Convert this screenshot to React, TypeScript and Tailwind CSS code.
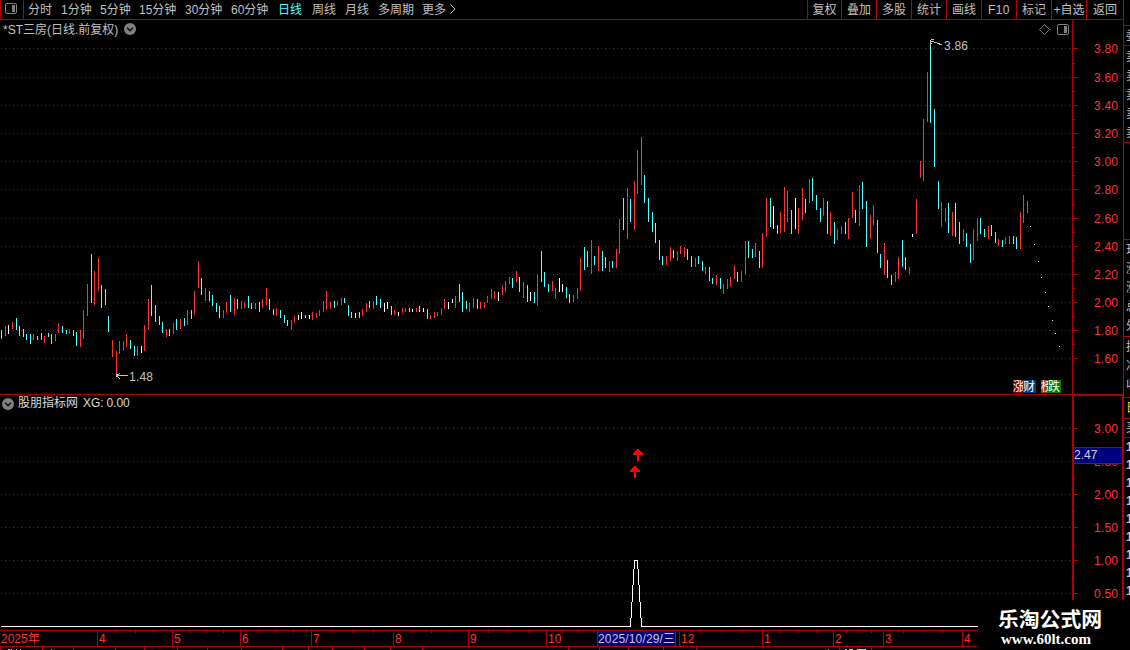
import React from 'react';

type Origin = { x: number; y: number; bars: string };

// Each bar: position, high, low, tone (r = up, c = down, w = flat), in thirds of a pixel from the block origin.
const blocks: Origin[] = [
  {
    x: 0,
    y: 230,
    bars:
      '4,300,327,c 16,288,318,r 25,285,312,w 37,276,297,r 49,264,300,c 58,288,318,c 70,297,321,c 79,312,330,c 91,312,342,c 100,312,330,r 112,318,330,c 124,309,330,c 133,318,339,r 145,309,321,c 154,312,342,c 166,312,333,r 175,279,309,r 187,288,309,c 199,300,312,c 208,297,312,r 220,300,318,c 229,306,348,c 241,300,351,r 250,240,327,r 262,162,258,r 274,72,219,c 283,123,225,r 295,84,183,r 304,165,234,c 316,177,225,c 325,258,306,c 337,330,381,r 349,363,432,r 358,333,372,r 370,333,363,r 379,312,351,r 391,330,357,c 403,348,378,c 412,348,378,r 424,348,369,w 433,285,363,r 445,207,300,r 454,165,258,c 466,225,276,c 478,258,285,c 487,276,309,c 499,297,321,r 508,297,318,c 520,279,312,r 529,267,300,c 541,267,297,r 553,264,288,c 562,240,285,r 574,240,267,c 583,183,255,r 595,93,174,r 604,144,195,c 616,174,213,r 628,183,213,c 637,195,228,c 649,219,246,c 658,228,264,c 670,240,264,r 679,216,249,r 691,195,246,c 703,204,255,r 712,207,237,c 724,213,237,r 733,216,234,r 745,198,234,c 754,219,237,c 766,219,237,r 778,216,246,c 787,207,234,r 799,174,225,r 808,207,240,c 820,237,255,c 829,234,258,r',
  },
  {
    x: 270,
    y: 230,
    bars:
      '31,240,264,c 43,255,279,c 52,270,288,c 64,270,300,r 73,258,279,r 85,255,270,w 94,246,267,w 106,255,264,c 118,255,267,w 127,246,270,r 139,249,264,r 148,240,258,r 160,213,246,r 169,183,240,r 181,216,237,r 193,213,234,c 202,213,228,r 214,204,225,r 223,204,219,c 235,225,258,c 244,246,264,c 256,249,264,w 268,246,264,c 277,237,258,r 289,219,246,r 298,213,234,c 310,213,237,r 319,198,225,c 331,207,234,c 343,219,246,w 352,216,237,w 364,228,255,c 373,240,255,r 385,246,258,w 397,234,249,r 406,234,246,r 418,234,246,c 427,237,246,w 439,234,246,r 448,228,246,c 460,234,246,w 472,237,267,c 481,255,267,r 493,246,264,r 502,246,258,r 514,234,255,r 523,207,237,r 535,216,237,w 547,207,219,w 556,198,234,r 568,162,216,c 577,186,246,c 589,213,237,c 598,219,246,r 610,204,234,r 622,207,237,c 631,216,237,r 643,216,234,r 652,198,219,r 664,177,207,r 673,183,207,r 685,186,213,w 697,165,195,r 706,153,186,r 718,141,162,r 727,144,174,c 739,123,156,r 748,141,186,c 760,156,204,r 772,165,216,c 781,186,213,w 793,186,219,c 802,132,228,r 814,63,156,c 823,126,171,c 835,162,186,c',
  },
  {
    x: 530,
    y: 120,
    bars:
      '67,483,513,r 76,504,537,r 88,474,516,w 97,492,516,w 109,501,534,c 118,522,549,c 130,525,546,r 142,504,537,r 151,414,513,r 163,381,450,c 172,393,441,c 184,360,462,r 193,408,435,c 205,378,453,r 217,393,453,c 226,411,444,c 238,423,456,r 247,423,444,c 259,387,444,r 268,297,402,r 280,234,330,c 292,204,357,r 301,237,306,c 313,183,330,r 322,90,222,r 334,51,195,r 343,165,249,c 355,234,306,c 367,276,336,c 376,309,369,c 388,360,420,c 397,408,435,c 409,408,435,r 421,381,423,r 430,390,414,c 442,393,423,r 451,378,402,r 463,381,411,r 472,387,420,c 484,408,441,c 496,414,441,r 505,408,432,c 517,423,453,c 526,441,462,r 538,441,483,c 547,474,492,c 559,465,495,r 571,474,507,c 580,492,522,r 592,477,507,r 601,471,501,r 613,435,477,r 622,456,486,c 634,453,486,r',
  },
  {
    x: 740,
    y: 160,
    bars:
      '16,243,345,r 25,243,294,c 37,267,294,c 46,249,291,r 58,273,324,c 67,219,324,r 79,114,231,r 91,114,201,c 100,138,207,w 112,195,222,c 121,156,219,r 133,81,216,r 142,93,186,r 154,150,222,c 166,114,207,w 175,144,222,r 187,84,180,r 196,117,159,c 208,57,129,r 217,54,123,c 229,105,150,c 241,144,186,c 250,114,168,r 262,123,222,c 271,156,228,r 283,186,252,c 292,207,240,r 304,198,222,r 316,186,222,c 325,174,237,r 337,96,174,r 346,150,189,c 358,75,198,r 367,66,147,c 379,123,261,c 391,165,237,r 400,135,195,r 412,180,279,c 421,282,324,c 433,249,345,r 442,300,354,c 454,345,375,c',
  },
  {
    x: 890,
    y: 30,
    bars:
      '16,726,756,r 25,681,747,r 37,630,711,c 46,681,720,c 58,711,735,r 67,612,621,w 79,507,612,r 91,393,444,r 100,267,453,r 112,126,276,r 121,39,279,c 133,237,411,c 145,453,537,c 154,516,591,r 166,534,576,r 175,519,609,c 187,546,618,r 196,519,621,c 208,576,642,c 220,597,633,r 229,609,651,c 241,642,699,c 250,597,690,r 262,564,633,r 271,564,612,c 283,597,621,c 295,588,627,r 304,585,618,c 316,606,639,c 325,627,648,r 337,630,651,c 346,621,642,r 358,618,642,r 370,618,642,c 379,621,657,c 391,546,657,r 400,495,579,r 412,513,549,r 421,588,591,w 433,642,645,w 445,693,696,w 454,741,744,w 466,786,789,w 475,828,831,w 487,870,873,w 496,909,912,w 508,948,951,w',
  },
];

const tone: Record<string, string> = { r: '#ff3232', c: '#54ffff', w: '#ffffff' };

const bars = blocks.flatMap((b) =>
  b.bars.split(' ').map((s) => {
    const [x, top, bottom, t] = s.split(',');
    return {
      x: b.x + Math.floor(+x / 3),
      y: b.y + Math.round(+top / 3),
      h: Math.round((+bottom - +top) / 3),
      fill: tone[t],
    };
  }),
);

const priceLevels: [number, string][] = [
  [48, '3.80'], [77, '3.60'], [105, '3.40'], [133, '3.20'], [161, '3.00'], [189, '2.80'],
  [218, '2.60'], [246, '2.40'], [274, '2.20'], [302, '2.00'], [330, '1.80'], [358, '1.60'],
];
const priceMinor = [63, 91, 119, 147, 175, 204, 232, 260, 288, 316, 344];
const signalLevels: [number, string][] = [
  [428, '3.00'], [461, '2.50'], [494, '2.00'], [527, '1.50'], [560, '1.00'], [593, '0.50'],
];
const signalMinor = [445, 478, 511, 544, 577];

const periods: [string, string][] = [
  ['分时', 'w-[33px]'], ['1分钟', 'w-[39px]'], ['5分钟', 'w-[39px]'], ['15分钟', 'w-[46px]'],
  ['30分钟', 'w-[46px]'], ['60分钟', 'w-[47px]'], ['日线', 'w-[34px] text-[#54ffff]'], ['周线', 'w-[33px]'],
  ['月线', 'w-[33px]'], ['多周期', 'w-[44px]'], ['更多', 'w-[28px]'],
];

const actions: [string, string][] = [
  ['复权', 'w-[34px]'], ['叠加', 'w-[35px]'], ['多股', 'w-[35px]'], ['统计', 'w-[35px]'], ['画线', 'w-[35px]'],
  ['F10', 'w-[35px] tracking-[0.4px]'], ['标记', 'w-[35px]'], ['+自选', 'w-[35px]'], ['返回', 'w-[37px]'],
];

const months: [string, string][] = [
  ['2025年', 'w-[97px] pl-[1px]'], ['4', 'w-[75px]'], ['5', 'w-[68px]'], ['6', 'w-[71px]'], ['7', 'w-[82px]'],
  ['8', 'w-[75px]'], ['9', 'w-[78px]'], ['10', 'w-[133px]'], ['12', 'w-[83px]'], ['1', 'w-[71px]'],
  ['2', 'w-[50px]'], ['3', 'w-[79px]'], ['4', 'w-[16px]'],
];
const dividers = [97, 172, 240, 311, 393, 468, 546, 679, 762, 833, 883, 962];
const weekTicks = [
  116, 135, 153, 189, 206, 223, 258, 276, 293, 332, 352, 373, 412, 431, 449, 488, 508, 528, 562, 578, 593,
  700, 721, 742, 780, 798, 816, 846, 858, 871, 903, 923, 942,
];
const lowerTicks = [
  0, 42, 73, 115, 144, 177, 207, 241, 282, 308, 332, 364, 390, 422, 568, 599, 628, 663, 696, 839, 871,
];

function Grid({ levels }: { levels: [number, string][] }) {
  return (
    <>
      {levels.map(([y]) => (
        <line key={y} x1={1} x2={1072} y1={y + 0.5} y2={y + 0.5} stroke="#b00000" strokeDasharray="1 3" />
      ))}
    </>
  );
}

function Axis({ levels, minor, x }: { levels: [number, string][]; minor: number[]; x: number }) {
  return (
    <>
      {levels.map(([y, t]) => (
        <g key={y}>
          <rect x={x} y={y} width={1078 - x} height={1} fill="#b00000" />
          <text x={1094} y={y + 5} fill="#ff3232" fontSize={12} textLength={24} lengthAdjust="spacing">
            {t}
          </text>
        </g>
      ))}
      {minor.map((y) => (
        <rect key={y} x={x} y={y} width={1075 - x} height={1} fill="#b00000" />
      ))}
    </>
  );
}

function ChevronDisc() {
  return (
    <svg width="12" height="12" viewBox="0 0 12 12" className="shrink-0">
      <circle cx="6" cy="6" r="6" fill="#808080" />
      <path d="M3 4.8 6 7.6 9 4.8" fill="none" stroke="#101010" strokeWidth="1.5" />
    </svg>
  );
}

function PanelIcon({ className }: { className?: string }) {
  return (
    <svg width="12" height="11" viewBox="0 0 12 11" className={className}>
      <rect x="0.5" y="0.5" width="11" height="10" rx="1.5" fill="none" stroke="#808080" />
      <rect x="7" y="2" width="3" height="7" fill="#808080" />
    </svg>
  );
}

function TopBar() {
  return (
    <header className="flex h-5 shrink-0 border-b border-l border-[#b00000] leading-[20px]">
      <div className="flex w-[23px] shrink-0 border-r border-[#b00000] pl-1 pt-[3px]">
        <PanelIcon />
      </div>
      <nav className="flex h-[19px] flex-1 pl-[4px]">
        {periods.map(([t, c]) => (
          <span key={t} className={`shrink-0 ${c}`}>
            {t}
          </span>
        ))}
        <svg width="6" height="10" viewBox="0 0 6 10" className="mt-1">
          <path d="M0.5 0.5 5 5 0.5 9.5" fill="none" stroke="#c0c0c0" />
        </svg>
      </nav>
      <div className="flex h-[19px]">
        {actions.map(([t, c]) => (
          <span key={t} className={`flex shrink-0 justify-center whitespace-nowrap border-l border-[#b00000] ${c}`}>
            {t}
          </span>
        ))}
      </div>
    </header>
  );
}

function PricePanel() {
  return (
    <section className="relative h-[374px] shrink-0">
      <svg width="1123" height="374" viewBox="0 20 1123 374" className="block">
        <g shapeRendering="crispEdges">
          <Grid levels={priceLevels} />
          {bars.map((b) => (
            <rect key={b.x} x={b.x} y={b.y} width={1} height={b.h} fill={b.fill} />
          ))}
          <rect x={1072} y={20} width={1} height={374} fill="#b00000" />
          <Axis levels={priceLevels} minor={priceMinor} x={1073} />
        </g>
        <g fill="#c0c0c0" shapeRendering="crispEdges">
          <path d="M931 39h3v1h-3zM930 40h1v5h-1zM931 41h3v1h-3zM934 42h3v1h-3zM937 43h3v1h-3zM939 44h3v1h-3zM931 43h1v1h-1z" />
          <path d="M116 375h12v1h-12zM116 374h2v3h-2zM118 374h1v1h-1zM119 373h1v1h-1zM118 377h1v1h-1zM119 378h1v1h-1z" />
        </g>
        <g fill="#c0c0c0" fontSize={12}>
          <text x={944} y={50} textLength={24}>3.86</text>
          <text x={129} y={381} textLength={24}>1.48</text>
        </g>
        <path d="M1044.500 24.500l5 5-5 5-5-5z" fill="none" stroke="#808080" />
      </svg>
      <div className="absolute left-[3px] top-0 flex items-center gap-[6px] leading-[20px]">
        <span>*ST三房(日线.前复权)</span>
        <div className="-mt-[2px]">
          <ChevronDisc />
        </div>
      </div>
      <PanelIcon className="absolute left-[1057px] top-1" />
      <div className="absolute left-[1013px] top-[360px] flex h-[13px] leading-[14px] text-white">
        <span className="w-[10px] overflow-hidden bg-[#800000]">涨</span>
        <span className="w-[13px] bg-[#003c78]">财</span>
        <span className="ml-[5px] w-[7px] overflow-hidden bg-[#904000]">榜</span>
        <span className="w-[13px] bg-[#008000]">跌</span>
      </div>
    </section>
  );
}

function SignalPanel() {
  return (
    <section className="relative h-[236px] shrink-0">
      <svg width="1123" height="236" viewBox="0 394 1123 236" className="block">
        <g shapeRendering="crispEdges">
          <Grid levels={signalLevels} />
          <rect x={0} y={394} width={1123} height={1} fill="#b00000" />
          <rect x={1072} y={394} width={51} height={2} fill="#b00000" />
          <rect x={1072} y={394} width={2} height={206} fill="#b00000" />
          <rect x={1122} y={394} width={1} height={206} fill="#b00000" />
          <Axis levels={signalLevels} minor={signalMinor} x={1074} />
          <g fill="#ffffff">
            <rect x={1} y={626} width={630} height={1} />
            <rect x={641} y={626} width={337} height={1} />
            <rect x={634} y={560} width={4} height={1} />
            <rect x={634} y={560} width={1} height={9} />
            <rect x={637} y={560} width={1} height={9} />
            <rect x={633} y={569} width={1} height={16} />
            <rect x={638} y={569} width={1} height={16} />
            <rect x={632} y={585} width={1} height={17} />
            <rect x={639} y={585} width={1} height={17} />
            <rect x={631} y={602} width={1} height={16} />
            <rect x={640} y={602} width={1} height={16} />
            <rect x={630} y={618} width={1} height={9} />
            <rect x={641} y={618} width={1} height={9} />
          </g>
          <rect x={1074} y={447} width={48} height={17} fill="#b00000" />
          <rect x={1074} y={448} width={48} height={15} fill="#000080" />
        </g>
        <g fill="#ff0000">
          <path d="M637 449h2v1h1v1h1v1h1v1h1v2h-4v6h-2v-6h-4v-2h1v-1h1v-1h1v-1h1z" />
          <path d="M634 466h2v1h1v1h1v1h1v1h1v2h-4v6h-2v-6h-4v-2h1v-1h1v-1h1v-1h1z" />
        </g>
        <text x={1074} y={459} fill="#d0d0d0" fontSize={12}>2.47</text>
      </svg>
      <div className="absolute left-[2px] top-0 flex items-center gap-1 leading-[19px] text-[#d8d8d8]">
        <ChevronDisc />
        <span className="flex gap-[5px]">
          <span>股朋指标网</span>
          <span className="tracking-[-0.1px]">XG: 0.00</span>
        </span>
      </div>
    </section>
  );
}

function Timeline() {
  return (
    <footer className="relative h-5 w-[978px] shrink-0 overflow-hidden text-[#ff3232]">
      <svg width="978" height="20" viewBox="0 0 978 20" className="absolute inset-0" shapeRendering="crispEdges" fill="#b00000">
        <rect width={978} height={1} />
        <rect y={16} width={978} height={1} />
        {dividers.map((x) => <rect key={x} x={x} width={1} height={16} />)}
        {weekTicks.map((x) => <rect key={x} x={x} width={1} height={3} />)}
        {lowerTicks.map((x) => <rect key={x} x={x} y={16} width={1} height={4} />)}
        <g fill="#c0c0c0">
          <path d="M8 19h2v1h-2zM11 19h1v1h-1zM16 19h1v1h-1zM20 19h1v1h-1zM51 19h1v1h-1zM828 19h1v1h-1zM845 19h2v1h-2z" />
          <path d="M849 19h4v1h-4zM857 19h9v1h-9z" fill="#54ffff" />
        </g>
      </svg>
      <div className="relative flex leading-[19px]">
        {months.map(([t, c], i) => (
          <span key={i} className={`shrink-0 ${i ? 'pl-[2px]' : ''} ${c}`}>
            {t}
          </span>
        ))}
      </div>
      <span className="absolute left-[597px] top-0 h-[17px] w-[79px] whitespace-nowrap border border-[#b00000] bg-[#000080] text-center leading-[16px] tracking-[0.15px] text-[#c8c8c8]">
        2025/10/29/三
      </span>
    </footer>
  );
}

const stripGroups: [string, string[]][] = [
  ['h-[25px]', []],
  ['h-[20px] pt-[1px] leading-[19px]', ['委']],
  ['h-[97px] leading-[19px] pt-[2px]', ['卖', '卖', '卖', '卖', '卖']],
  ['h-[97px]', []],
  ['h-[97px] leading-[19px] pt-px', ['现', '涨', '涨', '总', '外']],
  ['h-[61px] leading-[19px] pt-px', ['换', '净', '收']],
  ['h-[21px] leading-[20px] text-[#e0e000]', ['日']],
  ['h-[19px] leading-[18px]', ['买']],
  ['h-[163px] leading-[18px] font-bold', ['1', '1', '1', '1', '1', '1', '1', '1', '1']],
];

function SideStrip() {
  return (
    <aside className="flex h-[600px] w-[7px] shrink-0 flex-col overflow-hidden border-l border-[#b00000]">
      {stripGroups.map(([c, rows], i) => (
        <div key={i} className={`shrink-0 overflow-hidden pl-[2px] ${i ? 'border-t border-[#b00000]' : ''} ${c}`}>
          {rows.map((t, j) => (
            <div key={j} className="w-3">
              {t}
            </div>
          ))}
        </div>
      ))}
    </aside>
  );
}

export default function App() {
  return (
    <div className="relative flex h-[650px] w-[1130px] overflow-hidden bg-black font-['Liberation_Sans','Noto_Sans_CJK_SC',sans-serif] text-xs text-[#c0c0c0]">
      <main className="flex w-[1123px] shrink-0 flex-col">
        <TopBar />
        <PricePanel />
        <SignalPanel />
        <Timeline />
      </main>
      <SideStrip />
      <div className="absolute left-[978px] top-[600px] h-[50px] w-[152px] bg-black text-white">
        <div className="pl-5 pt-[7px] text-[20.8px] font-bold leading-[25px]">乐淘公式网</div>
        <div className="pl-[23px] font-['Liberation_Serif',serif] text-[15px] font-bold leading-[15px]">www.60lt.com</div>
      </div>
    </div>
  );
}
